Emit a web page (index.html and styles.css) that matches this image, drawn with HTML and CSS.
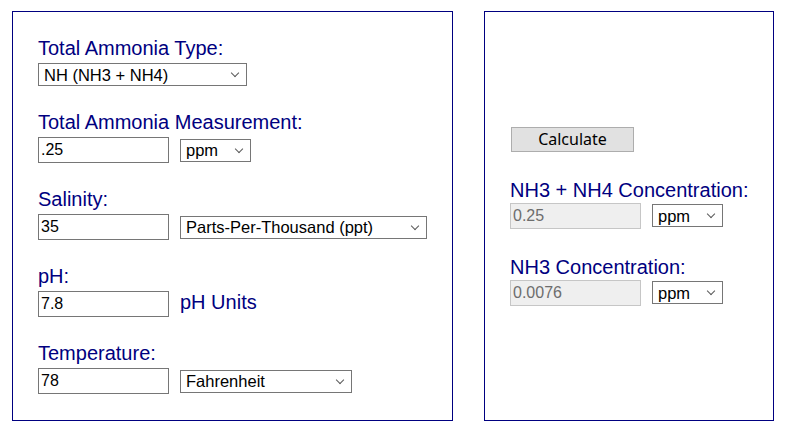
FILE: index.html
```html
<!DOCTYPE html>
<html lang="en">
<head>
    <meta charset="UTF-8">
    <meta name="viewport" content="width=device-width, initial-scale=1.0">
    <title>Ammonia Calculator</title>
    <link rel="stylesheet" href="styles.css">
</head>
<body>
    <div class="page">
        <form class="panel inputs" onsubmit="return false;">
            <div class="field">
                <label class="label" for="type">Total Ammonia Type:</label>
                <div class="row">
                    <span class="select-wrap w-type">
                        <select id="type">
                            <option>NH (NH3 + NH4)</option>
                            <option>N (NH3-N + NH4-N)</option>
                        </select>
                    </span>
                </div>
            </div>

            <div class="field">
                <label class="label" for="total">Total Ammonia Measurement:</label>
                <div class="row">
                    <input id="total" class="text" type="text" value=".25">
                    <span class="select-wrap w-unit">
                        <select>
                            <option>ppm</option>
                            <option>mg/L</option>
                        </select>
                    </span>
                </div>
            </div>

            <div class="field">
                <label class="label" for="salinity">Salinity:</label>
                <div class="row">
                    <input id="salinity" class="text" type="text" value="35">
                    <span class="select-wrap w-salt">
                        <select>
                            <option>Parts-Per-Thousand (ppt)</option>
                            <option>Specific Gravity</option>
                        </select>
                    </span>
                </div>
            </div>

            <div class="field">
                <label class="label" for="ph">pH:</label>
                <div class="row row-base">
                    <input id="ph" class="text" type="text" value="7.8">
                    <span class="unit">pH Units</span>
                </div>
            </div>

            <div class="field">
                <label class="label" for="temp">Temperature:</label>
                <div class="row">
                    <input id="temp" class="text" type="text" value="78">
                    <span class="select-wrap w-temp">
                        <select>
                            <option>Fahrenheit</option>
                            <option>Celsius</option>
                        </select>
                    </span>
                </div>
            </div>
        </form>

        <div class="panel results">
            <button class="calc" type="button">Calculate</button>

            <div class="field">
                <label class="label" for="both">NH3 + NH4 Concentration:</label>
                <div class="row">
                    <input id="both" class="text" type="text" value="0.25" disabled>
                    <span class="select-wrap w-unit">
                        <select>
                            <option>ppm</option>
                            <option>mg/L</option>
                        </select>
                    </span>
                </div>
            </div>

            <div class="field">
                <label class="label" for="nh3">NH3 Concentration:</label>
                <div class="row">
                    <input id="nh3" class="text" type="text" value="0.0076" disabled>
                    <span class="select-wrap w-unit">
                        <select>
                            <option>ppm</option>
                            <option>mg/L</option>
                        </select>
                    </span>
                </div>
            </div>
        </div>
    </div>
</body>
</html>
```

FILE: styles.css
```css
body {
    margin: 0;
    background: #ffffff;
    font-family: "Liberation Sans", Arial, sans-serif;
}
.page {
    display: flex;
    align-items: stretch;
    gap: 31px;
    padding: 11px 0 0 12px;
}
.panel {
    box-sizing: border-box;
    border: 1px solid #000080;
    margin: 0;
}
.inputs {
    width: 441px;
    padding: 25px 25px 26px;
}
.results {
    width: 290px;
    padding: 0 25px;
    display: flex;
    flex-direction: column;
    justify-content: center;
    align-items: flex-start;
}
.label,
.unit {
    display: block;
    font-size: 20px;
    line-height: 23px;
    color: #000080;
    white-space: nowrap;
}
.inputs .label {
    margin-bottom: 3px;
}
.inputs .field {
    margin-bottom: 25px;
}
.inputs .field:last-child {
    margin-bottom: 0;
}
.results .label {
    margin-bottom: 1px;
}
.results .field + .field {
    margin-top: 27px;
}
.row {
    display: flex;
    align-items: center;
    gap: 11px;
}
.row-base {
    align-items: baseline;
}
.text {
    box-sizing: border-box;
    width: 131px;
    height: 26px;
    margin: 0;
    padding: 0 2px;
    border: 1px solid #767676;
    border-radius: 0;
    font-family: "Liberation Sans", Arial, sans-serif;
    font-size: 16px;
    color: #000000;
    background: #ffffff;
}
.text:disabled {
    background: #efefef;
    border-color: #c6c6c6;
    color: #6d6d6d;
}
.select-wrap {
    position: relative;
    display: block;
    height: 23px;
}
.select-wrap::after {
    content: "";
    position: absolute;
    right: 9px;
    top: 7px;
    width: 5px;
    height: 5px;
    border-right: 1px solid #5a5a5a;
    border-bottom: 1px solid #5a5a5a;
    transform: rotate(45deg);
    pointer-events: none;
}
.select-wrap select {
    box-sizing: border-box;
    width: 100%;
    height: 23px;
    margin: 0;
    padding: 0 20px 0 5px;
    border: 1px solid #767676;
    border-radius: 0;
    background: #ffffff;
    -webkit-appearance: none;
    appearance: none;
    font-family: "Liberation Sans", Arial, sans-serif;
    font-size: 16.5px;
    color: #000000;
}
.w-type { width: 209px; }
.w-unit { width: 71px; }
.w-salt { width: 247px; }
.w-temp { width: 172px; }
.calc {
    width: 123px;
    height: 25px;
    margin: 0 0 27px 1px;
    padding: 0;
    border: 1px solid #adadad;
    border-radius: 0;
    background: #e1e1e1;
    font-family: "Noto Sans", "Open Sans", sans-serif;
    font-size: 16px;
    line-height: 21px;
    color: #000000;
}
```
